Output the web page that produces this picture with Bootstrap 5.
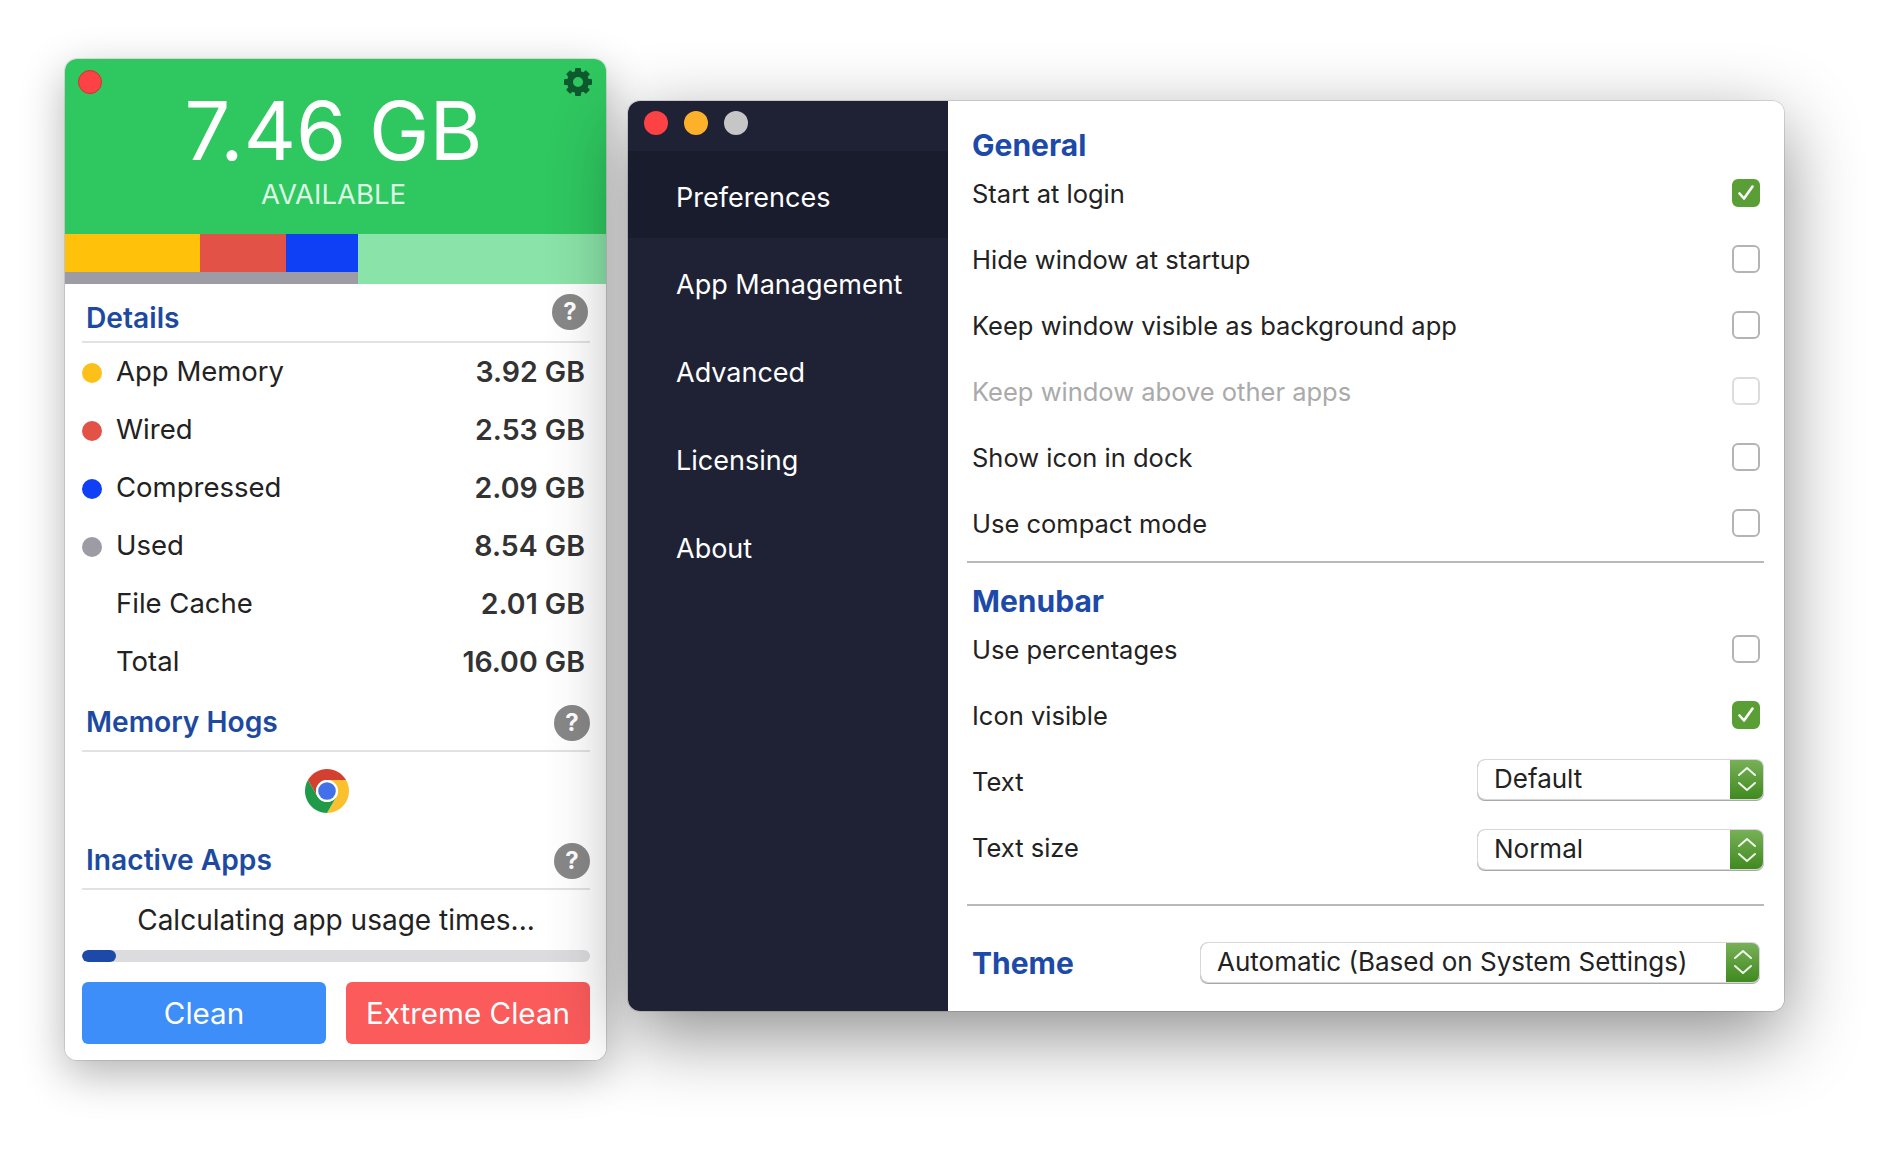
<!DOCTYPE html>
<html lang="en">

<head>
    <meta charset="UTF-8">
    <meta name="viewport" content="width=device-width, initial-scale=1.0">
    <title>Memory Clean</title>
    <link href="https://cdn.jsdelivr.net/npm/bootstrap@5.3.0/dist/css/bootstrap.min.css" rel="stylesheet">
    <style>
        html,
        body {
            height: 100%;
        }

        body {
            background: #fff;
            font-family: Inter, "Noto Sans", sans-serif;
            font-size: 27.5px;
            color: #222;
        }

        .stage {
            height: 1159px;
            padding: 59px 0 0 65px;
            gap: 22px;
            overflow: hidden;
        }

        /* left window */
        .mem-window {
            width: 541px;
            height: 1001px;
            border-radius: 12px;
            overflow: hidden;
            background: #fff;
        }

        .mem-shadow {
            border-radius: 12px;
            box-shadow: 0 0 0 1px rgba(0, 0, 0, .1), 0 14px 44px rgba(0, 0, 0, .3);
        }

        .mem-head {
            height: 175px;
            padding-right: 4px;
            background: #2fc760;
            color: #fff;
            position: relative;
        }

        .mem-close {
            position: absolute;
            left: 13px;
            top: 11px;
            width: 24px;
            height: 24px;
            border-radius: 50%;
            background: #fc4245;
            border: 1px solid #d33034;
        }

        .mem-gear {
            position: absolute;
            right: 13px;
            top: 8px;
        }

        .mem-total {
            font-size: 81px;
            font-weight: 400;
            line-height: 96px;
            padding-top: 24px;
        }

        .mem-avail {
            font-size: 27.5px;
            line-height: 30px;
            color: #dcf7e4;
        }

        .bar-used {
            width: 293px;
        }

        .bar-colors {
            height: 38px;
        }

        .bar-gray {
            height: 12px;
            background: #9d9ca4;
        }

        .bar-free {
            background: #8ae3a8;
        }

        .mem-body {
            padding: 0 16px 16px 17px;
        }

        .sect-head {
            height: 59px;
            padding-left: 4px;
            border-bottom: 2px solid #e2e2e4;
            color: #1d4aa0;
            font-size: 28.2px;
            font-weight: 600;
        }

        .sect-head.tall {
            height: 61px;
            padding-top: 4px;
        }

        .sect-name {
            padding-top: 11px;
        }

        .help-dot {
            width: 36px;
            height: 36px;
            border-radius: 50%;
            background: #888;
            color: #fff;
            font-size: 24px;
            font-weight: 700;
            line-height: 36px;
            text-align: center;
        }

        .help-first {
            margin: 0 2px 2px 0;
        }

        .stat-row {
            height: 58px;
        }

        .stat-dot {
            width: 20px;
            height: 20px;
            border-radius: 50%;
            margin: 2px 14px 0 0;
            flex: none;
        }

        .stat-value {
            font-size: 28.5px;
            font-weight: 600;
            color: #333;
            padding-right: 5px;
        }

        .hog-row {
            height: 77px;
            padding-right: 18px;
        }

        .calc-text {
            font-size: 28px;
            line-height: 60px;
            height: 60px;
            color: #222;
        }

        .usage-track {
            height: 12px;
            border-radius: 6px;
            background: #dcdcde;
        }

        .usage-fill {
            background: #1d4aa8;
            border-radius: 6px;
        }

        .clean-btns {
            gap: 20px;
            margin-top: 20px;
        }

        .clean-btn {
            flex: 1 1 0;
            height: 62px;
            font-size: 29.6px;
            color: #fff;
            border: 0;
            border-radius: 6px;
            padding: 0;
        }

        .clean-blue,
        .clean-blue:hover {
            background: #3d8ef8;
            color: #fff;
        }

        .clean-red,
        .clean-red:hover {
            background: #fb5b5b;
            color: #fff;
        }

        /* right window */
        .pref-window {
            width: 1156px;
            height: 910px;
            border-radius: 12px;
            overflow: hidden;
            background: #fff;
        }

        .pref-shadow {
            position: relative;
            margin-top: 42px;
            border-radius: 12px;
            box-shadow: 0 0 0 1px rgba(0, 0, 0, .12), 0 24px 76px rgba(0, 0, 0, .45);
        }

        .pref-side {
            width: 320px;
            background: #1f2234;
            flex: none;
        }

        .pref-lights {
            height: 50px;
            padding: 10px 0 0 16px;
            gap: 16px;
        }

        .light {
            width: 24px;
            height: 24px;
            border-radius: 50%;
        }

        .side-link {
            height: 88px;
            padding: 7px 0 0 48px;
            display: flex;
            align-items: center;
            color: #fff;
            font-size: 27px;
        }

        .side-link:hover {
            color: #fff;
        }

        .side-link.active {
            background: #191c2c;
            height: 87px;
        }

        .pref-main {
            padding: 0 20px 0 19px;
        }

        .pref-title {
            color: #1d4aa8;
            font-size: 30px;
            font-weight: 700;
            padding-left: 5px;
        }

        .pref-title.first {
            height: 60px;
            padding-top: 22px;
        }

        .pref-title.second {
            height: 54px;
            padding-top: 16px;
        }

        .pref-row {
            height: 66px;
            padding-left: 5px;
            padding-right: 4px;
            font-size: 25.5px;
        }

        .pref-row.off {
            color: #aaa;
        }

        .pref-rule {
            height: 2px;
            background: #b9b9bb;
        }

        .tick-box {
            width: 28px;
            height: 28px;
            margin: -3px 0 0;
            border: 2px solid #b4b4b6;
            border-radius: 6px;
            background: #fff;
        }

        .tick-box.on {
            background: #5a9e36;
            border-color: #5a9e36;
        }

        .tick-box.dim {
            border-color: #dcdcdc;
        }

        .pop-btn {
            width: 285px;
            height: 39px;
            border-radius: 7px;
            box-shadow: 0 0 0 1px #d8d8d8, 0 1px 0 1px #a8a8a8;
            overflow: hidden;
            margin-right: -3px;
        }

        .pop-btn.wide {
            width: 558px;
            margin: -2px 4px 0 0;
        }

        .pop-up {
            margin-top: -6px;
        }

        .pop-down {
            margin-top: 3px;
        }

        .pop-label {
            padding-left: 16px;
            font-size: 26px;
            line-height: 38px;
        }

        .pop-step {
            width: 33px;
            background: linear-gradient(#78b058, #3f8a1f);
        }

        .theme-row {
            height: 105px;
            padding: 9px 1px 0 5px;
        }
    </style>
</head>

<body>
    <div class="stage d-flex align-items-start">
        <div class="mem-shadow">
            <div class="mem-window">
                <div class="mem-head text-center">
                    <span class="mem-close"></span>
                    <svg class="mem-gear" width="30" height="30" viewBox="0 0 30 30">
                        <circle cx="15" cy="15" r="8" fill="none" stroke="#0e5a2e" stroke-width="6" />
                        <g fill="#0e5a2e">
                            <rect x="12" y="1" width="6" height="6" rx="1" />
                            <rect x="12" y="1" width="6" height="6" rx="1" transform="rotate(45 15 15)" />
                            <rect x="12" y="1" width="6" height="6" rx="1" transform="rotate(90 15 15)" />
                            <rect x="12" y="1" width="6" height="6" rx="1" transform="rotate(135 15 15)" />
                            <rect x="12" y="1" width="6" height="6" rx="1" transform="rotate(180 15 15)" />
                            <rect x="12" y="1" width="6" height="6" rx="1" transform="rotate(225 15 15)" />
                            <rect x="12" y="1" width="6" height="6" rx="1" transform="rotate(270 15 15)" />
                            <rect x="12" y="1" width="6" height="6" rx="1" transform="rotate(315 15 15)" />
                        </g>
                    </svg>
                    <div class="mem-total">7.46 GB</div>
                    <div class="mem-avail">AVAILABLE</div>
                </div>
                <div class="d-flex">
                    <div class="bar-used">
                        <div class="bar-colors d-flex">
                            <div style="width:135px;background:#ffc10a"></div>
                            <div style="width:86px;background:#e35247"></div>
                            <div style="width:72px;background:#0f40f5"></div>
                        </div>
                        <div class="bar-gray"></div>
                    </div>
                    <div class="bar-free flex-grow-1"></div>
                </div>
                <div class="mem-body">
                    <div class="sect-head d-flex justify-content-between align-items-center">
                        <span class="sect-name">Details</span>
                        <span class="help-dot help-first">?</span>
                    </div>
                    <div class="stat-row d-flex align-items-center">
                        <span class="stat-dot" style="background:#fdc018"></span>
                        <span class="flex-grow-1">App Memory</span>
                        <span class="stat-value">3.92 GB</span>
                    </div>
                    <div class="stat-row d-flex align-items-center">
                        <span class="stat-dot" style="background:#e35247"></span>
                        <span class="flex-grow-1">Wired</span>
                        <span class="stat-value">2.53 GB</span>
                    </div>
                    <div class="stat-row d-flex align-items-center">
                        <span class="stat-dot" style="background:#0f40f5"></span>
                        <span class="flex-grow-1">Compressed</span>
                        <span class="stat-value">2.09 GB</span>
                    </div>
                    <div class="stat-row d-flex align-items-center">
                        <span class="stat-dot" style="background:#9d9ca4"></span>
                        <span class="flex-grow-1">Used</span>
                        <span class="stat-value">8.54 GB</span>
                    </div>
                    <div class="stat-row d-flex align-items-center">
                        <span class="stat-dot"></span>
                        <span class="flex-grow-1">File Cache</span>
                        <span class="stat-value">2.01 GB</span>
                    </div>
                    <div class="stat-row d-flex align-items-center">
                        <span class="stat-dot"></span>
                        <span class="flex-grow-1">Total</span>
                        <span class="stat-value">16.00 GB</span>
                    </div>

                    <div class="sect-head tall d-flex justify-content-between align-items-center">
                        <span>Memory Hogs</span>
                        <span class="help-dot">?</span>
                    </div>
                    <div class="hog-row d-flex justify-content-center align-items-center">
                        <svg width="44" height="44" viewBox="4 4 40 40">
                            <path fill="#d3402f" d="M6.68 14A20 20 0 0 1 41.32 14H24A10 10 0 0 0 15.34 29Z" />
                            <path fill="#fbc02d" transform="rotate(120 24 24)" d="M6.68 14A20 20 0 0 1 41.32 14H24A10 10 0 0 0 15.34 29Z" />
                            <path fill="#1e9a48" transform="rotate(240 24 24)" d="M6.68 14A20 20 0 0 1 41.32 14H24A10 10 0 0 0 15.34 29Z" />
                            <circle cx="24" cy="24" r="10" fill="#fff" />
                            <circle cx="24" cy="24" r="8" fill="#4170e8" />
                        </svg>
                    </div>

                    <div class="sect-head tall d-flex justify-content-between align-items-center">
                        <span>Inactive Apps</span>
                        <span class="help-dot">?</span>
                    </div>
                    <div class="calc-text text-center">Calculating app usage times...</div>
                    <div class="progress usage-track">
                        <div class="progress-bar usage-fill" style="width:6.7%"></div>
                    </div>
                    <div class="clean-btns d-flex">
                        <button class="btn clean-btn clean-blue">Clean</button>
                        <button class="btn clean-btn clean-red">Extreme Clean</button>
                    </div>
                </div>
            </div>
        </div>

        <div class="pref-shadow">
            <div class="pref-window d-flex">
                <div class="pref-side">
                    <div class="pref-lights d-flex">
                        <span class="light" style="background:#fc4245"></span>
                        <span class="light" style="background:#fdb12a"></span>
                        <span class="light" style="background:#c6c6c6"></span>
                    </div>
                    <nav class="nav flex-column">
                        <a class="nav-link side-link active" href="#">Preferences</a>
                        <a class="nav-link side-link" href="#">App Management</a>
                        <a class="nav-link side-link" href="#">Advanced</a>
                        <a class="nav-link side-link" href="#">Licensing</a>
                        <a class="nav-link side-link" href="#">About</a>
                    </nav>
                </div>
                <div class="pref-main flex-grow-1">
                    <div class="pref-title first">General</div>
                    <div class="pref-row d-flex justify-content-between align-items-center">
                        <span>Start at login</span>
                        <span class="tick-box on d-flex align-items-center justify-content-center">
                            <svg width="20" height="20" viewBox="0 0 20 20"><path d="M3.5 10.5l4.5 5 8.5-12" fill="none" stroke="#fff" stroke-width="2.6" stroke-linecap="round" stroke-linejoin="round" /></svg>
                        </span>
                    </div>
                    <div class="pref-row d-flex justify-content-between align-items-center">
                        <span>Hide window at startup</span>
                        <span class="tick-box"></span>
                    </div>
                    <div class="pref-row d-flex justify-content-between align-items-center">
                        <span>Keep window visible as background app</span>
                        <span class="tick-box"></span>
                    </div>
                    <div class="pref-row off d-flex justify-content-between align-items-center">
                        <span>Keep window above other apps</span>
                        <span class="tick-box dim"></span>
                    </div>
                    <div class="pref-row d-flex justify-content-between align-items-center">
                        <span>Show icon in dock</span>
                        <span class="tick-box"></span>
                    </div>
                    <div class="pref-row d-flex justify-content-between align-items-center">
                        <span>Use compact mode</span>
                        <span class="tick-box"></span>
                    </div>
                    <div class="pref-rule mt-1"></div>

                    <div class="pref-title second">Menubar</div>
                    <div class="pref-row d-flex justify-content-between align-items-center">
                        <span>Use percentages</span>
                        <span class="tick-box"></span>
                    </div>
                    <div class="pref-row d-flex justify-content-between align-items-center">
                        <span>Icon visible</span>
                        <span class="tick-box on d-flex align-items-center justify-content-center">
                            <svg width="20" height="20" viewBox="0 0 20 20"><path d="M3.5 10.5l4.5 5 8.5-12" fill="none" stroke="#fff" stroke-width="2.6" stroke-linecap="round" stroke-linejoin="round" /></svg>
                        </span>
                    </div>
                    <div class="pref-row d-flex justify-content-between align-items-center">
                        <span>Text</span>
                        <div class="pop-btn pop-up d-flex">
                            <span class="pop-label flex-grow-1">Default</span>
                            <span class="pop-step d-flex align-items-center justify-content-center">
                                <svg width="20" height="30" viewBox="0 0 20 30"><path d="M2 11l8-7 8 7M2 19l8 7 8-7" fill="none" stroke="#fff" stroke-width="2" stroke-linecap="round" stroke-linejoin="round" opacity=".9" /></svg>
                            </span>
                        </div>
                    </div>
                    <div class="pref-row d-flex justify-content-between align-items-center">
                        <span>Text size</span>
                        <div class="pop-btn pop-down d-flex">
                            <span class="pop-label flex-grow-1">Normal</span>
                            <span class="pop-step d-flex align-items-center justify-content-center">
                                <svg width="20" height="30" viewBox="0 0 20 30"><path d="M2 11l8-7 8 7M2 19l8 7 8-7" fill="none" stroke="#fff" stroke-width="2" stroke-linecap="round" stroke-linejoin="round" opacity=".9" /></svg>
                            </span>
                        </div>
                    </div>
                    <div class="pref-rule" style="margin-top:23px"></div>

                    <div class="theme-row d-flex justify-content-between align-items-center">
                        <span class="pref-title p-0">Theme</span>
                        <div class="pop-btn wide d-flex">
                            <span class="pop-label flex-grow-1">Automatic (Based on System Settings)</span>
                            <span class="pop-step d-flex align-items-center justify-content-center">
                                <svg width="20" height="30" viewBox="0 0 20 30"><path d="M2 11l8-7 8 7M2 19l8 7 8-7" fill="none" stroke="#fff" stroke-width="2" stroke-linecap="round" stroke-linejoin="round" opacity=".9" /></svg>
                            </span>
                        </div>
                    </div>
                </div>
            </div>
        </div>
    </div>

    <script src="https://cdn.jsdelivr.net/npm/bootstrap@5.3.0/dist/js/bootstrap.bundle.min.js"></script>
</body>

</html>
